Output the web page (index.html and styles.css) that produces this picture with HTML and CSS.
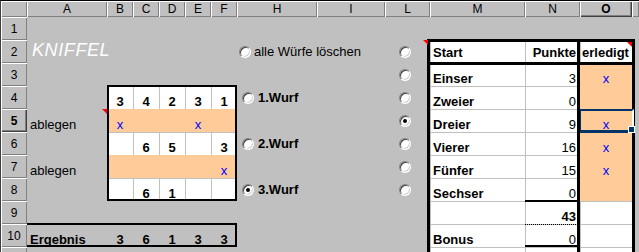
FILE: index.html
```html
<!DOCTYPE html>
<html lang="de">
<head>
  <meta charset="UTF-8">
  <title>Kniffel</title>
  <link rel="stylesheet" href="styles.css">
</head>
<body>
  <div class="sheet">
    <!-- column headers -->
    <div class="hd r0 c0"></div>
    <div class="hd r0 ca">A</div>
    <div class="hd r0 cb">B</div>
    <div class="hd r0 cc">C</div>
    <div class="hd r0 cd">D</div>
    <div class="hd r0 ce">E</div>
    <div class="hd r0 cf">F</div>
    <div class="hd r0 ch">H</div>
    <div class="hd r0 ci">I</div>
    <div class="hd r0 cl">L</div>
    <div class="hd r0 cm">M</div>
    <div class="hd r0 cn">N</div>
    <div class="hd r0 co sel">O</div>
    <div class="hd r0 cz"></div>

    <!-- row headers -->
    <div class="hd c0 r1">1</div>
    <div class="hd c0 r2">2</div>
    <div class="hd c0 r3">3</div>
    <div class="hd c0 r4">4</div>
    <div class="hd c0 r5 sel">5</div>
    <div class="hd c0 r6">6</div>
    <div class="hd c0 r7">7</div>
    <div class="hd c0 r8">8</div>
    <div class="hd c0 r9">9</div>
    <div class="hd c0 r10">10</div>
    <div class="hd c0 r11"></div>

    <!-- column A -->
    <div class="cell title r2 ca">KNIFFEL</div>
    <div class="cell r5 ca">ablegen</div>
    <div class="cell r7 ca">ablegen</div>
    <div class="cell b r10 ca">Ergebnis</div>

    <!-- dice table -->
    <div class="cell white b mid r4 cb">3</div>
    <div class="cell white b mid r4 cc">4</div>
    <div class="cell white b mid r4 cd">2</div>
    <div class="cell white b mid r4 ce">3</div>
    <div class="cell white b mid r4 cf">1</div>

    <div class="cell peach x mid r5 cb">x</div>
    <div class="cell peach r5 cc"></div>
    <div class="cell peach r5 cd"></div>
    <div class="cell peach x mid r5 ce">x</div>
    <div class="cell peach r5 cf"></div>

    <div class="cell white r6 cb"></div>
    <div class="cell white b mid r6 cc">6</div>
    <div class="cell white b mid r6 cd">5</div>
    <div class="cell white r6 ce"></div>
    <div class="cell white b mid r6 cf">3</div>

    <div class="cell peach r7 cb"></div>
    <div class="cell peach r7 cc"></div>
    <div class="cell peach r7 cd"></div>
    <div class="cell peach r7 ce"></div>
    <div class="cell peach x mid r7 cf">x</div>

    <div class="cell white r8 cb"></div>
    <div class="cell white b mid r8 cc">6</div>
    <div class="cell white b mid r8 cd">1</div>
    <div class="cell white r8 ce"></div>
    <div class="cell white r8 cf"></div>

    <div class="cell b mid r10 cb">3</div>
    <div class="cell b mid r10 cc">6</div>
    <div class="cell b mid r10 cd">1</div>
    <div class="cell b mid r10 ce">3</div>
    <div class="cell b mid r10 cf">3</div>

    <!-- option buttons -->
    <div class="opt r2 ch"><span class="radio"></span>alle Würfe löschen</div>
    <div class="opt wurf r4 ch"><span class="radio"></span>1.Wurf</div>
    <div class="opt wurf r6 ch"><span class="radio"></span>2.Wurf</div>
    <div class="opt wurf r8 ch"><span class="radio on"></span>3.Wurf</div>

    <div class="opt lopt r2 cl"><span class="radio"></span></div>
    <div class="opt lopt r3 cl"><span class="radio"></span></div>
    <div class="opt lopt r4 cl"><span class="radio"></span></div>
    <div class="opt lopt r5 cl"><span class="radio on"></span></div>
    <div class="opt lopt r6 cl"><span class="radio"></span></div>
    <div class="opt lopt r7 cl"><span class="radio"></span></div>
    <div class="opt lopt r8 cl"><span class="radio"></span></div>

    <!-- score table -->
    <div class="cell white b head r2 cm">Start</div>
    <div class="cell white b head num r2 cn">Punkte</div>
    <div class="cell white b head done r2 co">erledigt</div>

    <div class="cell white b r3 cm">Einser</div>
    <div class="cell white num r3 cn">3</div>
    <div class="cell peach x mid r3 co">x</div>

    <div class="cell white b r4 cm">Zweier</div>
    <div class="cell white num r4 cn">0</div>
    <div class="cell peach r4 co"></div>

    <div class="cell white b r5 cm">Dreier</div>
    <div class="cell white num r5 cn">9</div>
    <div class="cell peach x mid r5 co">x</div>

    <div class="cell white b r6 cm">Vierer</div>
    <div class="cell white num r6 cn">16</div>
    <div class="cell peach x mid r6 co">x</div>

    <div class="cell white b r7 cm">Fünfer</div>
    <div class="cell white num r7 cn">15</div>
    <div class="cell peach x mid r7 co">x</div>

    <div class="cell white b r8 cm">Sechser</div>
    <div class="cell white num r8 cn">0</div>
    <div class="cell peach r8 co"></div>

    <div class="cell white r9 cm"></div>
    <div class="cell white b num r9 cn">43</div>
    <div class="cell white r9 co"></div>

    <div class="cell white b r10 cm">Bonus</div>
    <div class="cell white num r10 cn">0</div>
    <div class="cell white r10 co"></div>

    <div class="cell white r11 cm"></div>
    <div class="cell white r11 cn"></div>
    <div class="cell white r11 co"></div>

    <!-- borders drawn over the cells -->
    <div class="box dice-box"></div>
    <div class="box sum-box"></div>
    <div class="box score-box"></div>
    <div class="box score-head"></div>
    <div class="box score-split"></div>
    <div class="box total-box"></div>
    <div class="box bonus-box"></div>
    <div class="box cursor"></div>

    <div class="note r2 cl"></div>
    <div class="note r2 co"></div>
    <div class="note r5 ca"></div>
  </div>
</body>
</html>
```

FILE: styles.css
```css
* { box-sizing: border-box; }

body {
  margin: 0;
  background: #c0c0c0;
  font-family: 'Liberation Sans', Arial, sans-serif;
  font-size: 13px;
  color: #000;
  overflow: hidden;
}

.sheet {
  display: grid;
  grid-template-columns: 26px 80px repeat(5, 26px) 80px 68px 45px 95px 55px 52px 1fr;
  grid-template-rows: 16px repeat(11, 23px);
  width: 639px;
  height: 252px;
  border-top: 1px solid #000;
  border-left: 1px solid #404040;
  overflow: hidden;
}

/* grid positions */
.c0 { grid-column: 1; }
.ca { grid-column: 2; }
.cb { grid-column: 3; }
.cc { grid-column: 4; }
.cd { grid-column: 5; }
.ce { grid-column: 6; }
.cf { grid-column: 7; }
.ch { grid-column: 8; }
.ci { grid-column: 9; }
.cl { grid-column: 10; }
.cm { grid-column: 11; }
.cn { grid-column: 12; }
.co { grid-column: 13; }
.cz { grid-column: 14; }

.r0 { grid-row: 1; }
.r1 { grid-row: 2; }
.r2 { grid-row: 3; }
.r3 { grid-row: 4; }
.r4 { grid-row: 5; }
.r5 { grid-row: 6; }
.r6 { grid-row: 7; }
.r7 { grid-row: 8; }
.r8 { grid-row: 9; }
.r9 { grid-row: 10; }
.r10 { grid-row: 11; }
.r11 { grid-row: 12; }

/* headers */
.hd {
  display: flex;
  align-items: center;
  justify-content: center;
  font-size: 12px;
  background: #c0c0c0;
  box-shadow: inset 1px 1px #fff, inset -1px -1px #808080;
}

.hd.sel {
  font-weight: bold;
  box-shadow: inset 1px 1px #fff, inset -1px -1px #404040, inset -2px -2px #808080;
}

/* cells */
.cell {
  display: flex;
  align-items: flex-end;
  padding: 0 3px;
  line-height: 15px;
  white-space: nowrap;
}

.white { background: #fff; box-shadow: inset 1px 1px #c0c0c0; }
.peach { background: #fc9; }

.b { font-weight: bold; }
.mid { justify-content: center; }
.num { justify-content: flex-end; padding-right: 4px; }
.x { color: #00f; }
.head { padding-bottom: 3px; }
.done { padding-left: 2px; }

.title {
  color: #fff;
  font-size: 18px;
  font-style: italic;
  letter-spacing: 0.6px;
  line-height: 20px;
  padding: 0 0 3px 5px;
}

/* option buttons */
.opt {
  display: flex;
  align-items: center;
  gap: 3px;
  padding-left: 2px;
  white-space: nowrap;
  line-height: 13px;
}

.opt.wurf {
  font-weight: bold;
  gap: 4px;
  padding-left: 5px;
}

.opt.lopt { padding-left: 14px; }

.radio {
  flex: none;
  width: 12px;
  height: 12px;
  border-radius: 50%;
  background: #fff;
  border: 1px solid;
  border-color: #808080 #fff #fff #808080;
  box-shadow: inset 1px 1px #404040, inset -1px -1px #d4d0c8;
}

.radio.on::after {
  content: "";
  display: block;
  width: 4px;
  height: 4px;
  margin: 3px;
  border-radius: 50%;
  background: #000;
}

/* borders */
.box { pointer-events: none; }

.dice-box {
  grid-column: 3 / 8;
  grid-row: 5 / 10;
  border: 2px solid #000;
  margin-top: -1px;
}

.sum-box {
  grid-column: 2 / 8;
  grid-row: 11;
  border: 2px solid #000;
  border-left: none;
  margin-top: -1px;
}

.score-box {
  grid-column: 11 / 14;
  grid-row: 3 / 13;
  border: 3px solid #000;
  border-bottom: none;
  margin: -1px -3px 0 -3px;
}

.score-head {
  grid-column: 11 / 14;
  grid-row: 3;
  border-bottom: 3px solid #000;
  margin-bottom: -2px;
}

.score-split {
  grid-column: 13;
  grid-row: 3 / 13;
  border-left: 3px solid #000;
  margin-left: -3px;
}

.total-box {
  grid-column: 12;
  grid-row: 10;
  border-top: 2px solid #000;
  border-bottom: 1px dotted #000;
  margin: -1px 0 -1px 0;
}

.bonus-box {
  grid-column: 12;
  grid-row: 11;
  border-bottom: 2px solid #000;
}

.cursor {
  grid-column: 13;
  grid-row: 6;
  position: relative;
  border-top: 2px solid #036;
  border-bottom: 3px solid #036;
  border-left: 1px solid #036;
  border-right: 2px solid #fff;
  margin: 0 -2px -1px 0;
}

.cursor::after {
  content: "";
  position: absolute;
  right: -3px;
  bottom: -3px;
  width: 5px;
  height: 5px;
  background: #036;
  border: 1px solid #fff;
}

/* comment markers */
.note {
  justify-self: end;
  align-self: start;
  width: 0;
  height: 0;
  border-top: 5px solid #f00;
  border-left: 5px solid transparent;
}

.note.cl { margin-right: 2px; }
.note.co { margin-top: 2px; }
```
